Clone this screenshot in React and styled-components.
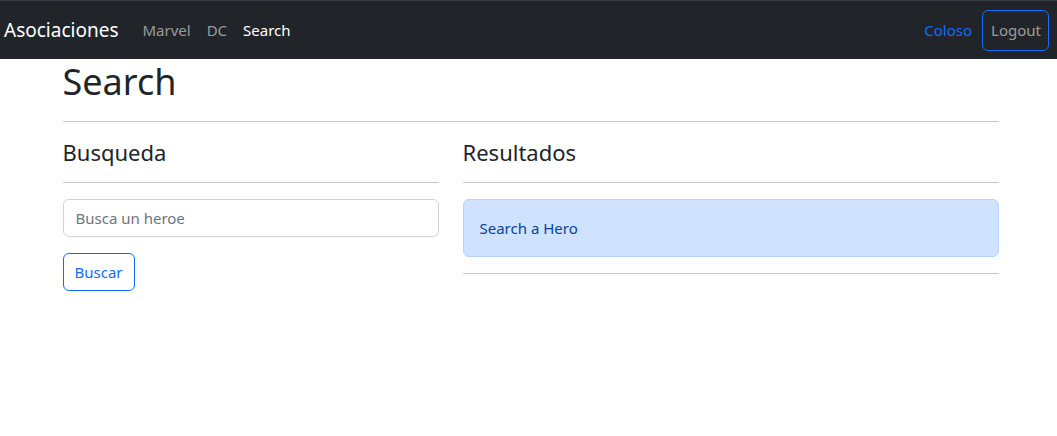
import React from 'react';
import styled, { createGlobalStyle } from 'styled-components';

const GlobalStyle = createGlobalStyle`
  * {
    box-sizing: border-box;
  }

  body {
    margin: 0;
    background: #fff;
    color: #212529;
    font-family: "Noto Sans", "Open Sans", sans-serif;
    font-size: 16px;
    line-height: 1.5;
  }
`;

const Navbar = styled.nav`
  display: flex;
  align-items: center;
  justify-content: space-between;
  height: 59px;
  padding: 0 8px 0 4px;
  background-color: #212529;
  border-top: 1px solid #3a3d41;
`;

const NavSide = styled.div`
  display: flex;
  align-items: center;
`;

const Brand = styled.a`
  margin-right: 16px;
  font-size: 19px;
  color: #fff;
  text-decoration: none;
  line-height: 30px;
`;

const NavLink = styled.a`
  padding: 8px;
  font-size: 15px;
  color: ${(p) => (p.$active ? '#fff' : 'rgba(255, 255, 255, 0.55)')};
  text-decoration: none;
`;

const UserName = styled.span`
  padding: 8px 10px 8px 8px;
  font-size: 15px;
  color: #0d6efd;
`;

const LogoutButton = styled.button`
  height: 41px;
  padding: 0 7px 0 8px;
  font-family: inherit;
  font-size: 15px;
  color: rgba(255, 255, 255, 0.55);
  background: transparent;
  border: 1px solid #0d6efd;
  border-radius: 6px;
  cursor: pointer;
`;

const Container = styled.main`
  width: 964px;
  margin: 0 auto;
  padding: 0 12px 0 16px;
`;

const PageTitle = styled.h1`
  margin: 0 0 8px;
  font-size: 36px;
  font-weight: 400;
  line-height: 46px;
`;

const Divider = styled.hr`
  margin: 16px 0;
  border: 0;
  border-top: 1px solid #212529;
  opacity: 0.25;
`;

const Row = styled.div`
  display: grid;
  grid-template-columns: 376px 536px;
  column-gap: 24px;
`;

const Column = styled.section`
  display: flex;
  flex-direction: column;
  align-items: flex-start;
`;

const SectionTitle = styled.h4`
  margin: 0;
  width: 100%;
  font-size: 22px;
  font-weight: 400;
  line-height: 28px;
`;

const FullDivider = styled(Divider)`
  width: 100%;
`;

const SearchInput = styled.input`
  width: 100%;
  height: 38px;
  padding: 6px 12px;
  font-family: inherit;
  font-size: 15px;
  color: #212529;
  border: 1px solid #ced4da;
  border-radius: 6px;
  outline: none;

  &::placeholder {
    color: #6c757d;
  }
`;

const OutlineButton = styled.button`
  margin-top: 16px;
  height: 38px;
  padding: 0 11px;
  font-family: inherit;
  font-size: 15px;
  color: #0d6efd;
  background: transparent;
  border: 1px solid #0d6efd;
  border-radius: 6px;
  cursor: pointer;
`;

const Alert = styled.div`
  width: 100%;
  padding: 16px;
  font-size: 15px;
  line-height: 24px;
  color: #084298;
  background-color: #cfe2ff;
  border: 1px solid #b6d4fe;
  border-radius: 6px;
`;

const App = () => {
  return (
    <>
      <GlobalStyle />
      <Navbar>
        <NavSide>
          <Brand href="#">Asociaciones</Brand>
          <NavLink href="#">Marvel</NavLink>
          <NavLink href="#">DC</NavLink>
          <NavLink href="#" $active>Search</NavLink>
        </NavSide>
        <NavSide>
          <UserName>Coloso</UserName>
          <LogoutButton>Logout</LogoutButton>
        </NavSide>
      </Navbar>

      <Container>
        <PageTitle>Search</PageTitle>
        <Divider />
        <Row>
          <Column>
            <SectionTitle>Busqueda</SectionTitle>
            <FullDivider />
            <SearchInput type="text" placeholder="Busca un heroe" />
            <OutlineButton>Buscar</OutlineButton>
          </Column>
          <Column>
            <SectionTitle>Resultados</SectionTitle>
            <FullDivider />
            <Alert>Search a Hero</Alert>
            <FullDivider />
          </Column>
        </Row>
      </Container>
    </>
  );
};

export default App;
